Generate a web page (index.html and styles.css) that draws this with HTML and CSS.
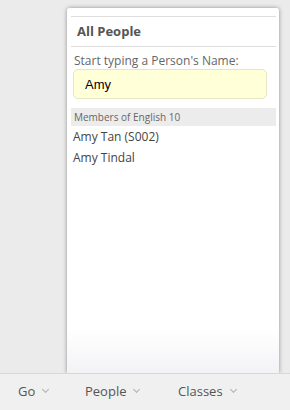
FILE: index.html
```html
<!DOCTYPE html>
<html lang="en">
<head>
  <meta charset="UTF-8" />
  <meta name="viewport" content="width=device-width, initial-scale=1.0" />
  <title>All People</title>
  <link rel="stylesheet" href="styles.css">
</head>
<body>
  <div class="main">
    <div class="panel">
      <div class="panelTitle">All People</div>
      <div class="search">
        <label class="searchLabel" for="person">Start typing a Person's Name:</label>
        <input class="searchInput" id="person" type="text" value="Amy">
      </div>
      <div class="results">
        <div class="groupHeader">Members of English 10</div>
        <div class="person">Amy Tan (S002)</div>
        <div class="person">Amy Tindal</div>
      </div>
    </div>
  </div>
  <div class="bottomBar">
    <div class="menu">Go <span class="chev"></span></div>
    <div class="menu">People <span class="chev"></span></div>
    <div class="menu">Classes <span class="chev"></span></div>
  </div>
</body>
</html>
```

FILE: styles.css
```css
body {
  margin: 0;
  height: 410px;
  display: flex;
  flex-direction: column;
  background-color: #ebebeb;
  font-family: "Open Sans", "Noto Sans", sans-serif;
  overflow: hidden;
}
.main {
  flex: 1;
  display: flex;
  padding: 8px 0 0 67px;
  min-height: 0;
}
.panel {
  width: 212px;
  box-sizing: border-box;
  padding: 8px 3px 0 4px;
  background: linear-gradient(to bottom, #fff 0, #fff 88%, #f3f3f6 100%);
  box-shadow: 0 0 4px rgba(0, 0, 0, 0.4);
  border-radius: 3px 3px 0 0;
}
.panelTitle {
  border-top: 1px solid #dedede;
  border-bottom: 1px solid #dedede;
  height: 29px;
  line-height: 29px;
  padding-left: 6px;
  font-size: 13px;
  font-weight: bold;
  color: #555;
}
.search {
  display: flex;
  flex-direction: column;
  padding: 6px 9px 0 2px;
}
.searchLabel {
  font-size: 12px;
  color: #666;
  line-height: 16px;
  padding-left: 1px;
}
.searchInput {
  margin-top: 0;
  height: 30px;
  box-sizing: border-box;
  border: 1px solid #e6e6c6;
  border-radius: 5px;
  background-color: #ffffd8;
  padding: 0 11px;
  font-family: "Liberation Sans", Arial, sans-serif;
  font-size: 13px;
  color: #000;
  outline: none;
}
.results {
  margin-top: 9px;
}
.groupHeader {
  background-color: #ececec;
  height: 18px;
  line-height: 18px;
  padding-left: 3px;
  font-size: 10px;
  color: #666;
}
.person {
  height: 21px;
  line-height: 21px;
  padding-left: 2px;
  font-size: 12px;
  color: #444;
}
.bottomBar {
  height: 37px;
  flex-shrink: 0;
  background-color: #f0f0f0;
  border-top: 1px solid #d8d8d8;
  box-sizing: border-box;
  display: flex;
  align-items: center;
  padding: 0 0 2px 18px;
}
.menu {
  font-size: 13px;
  color: #555;
  display: flex;
  align-items: center;
}
.menu:nth-child(1) { width: 67px; }
.menu:nth-child(2) { width: 93px; }
.chev {
  display: inline-block;
  width: 4px;
  height: 4px;
  border-right: 1.5px solid #b0b0b0;
  border-bottom: 1.5px solid #b0b0b0;
  transform: rotate(45deg);
  margin: 0 0 3px 8px;
}
```
